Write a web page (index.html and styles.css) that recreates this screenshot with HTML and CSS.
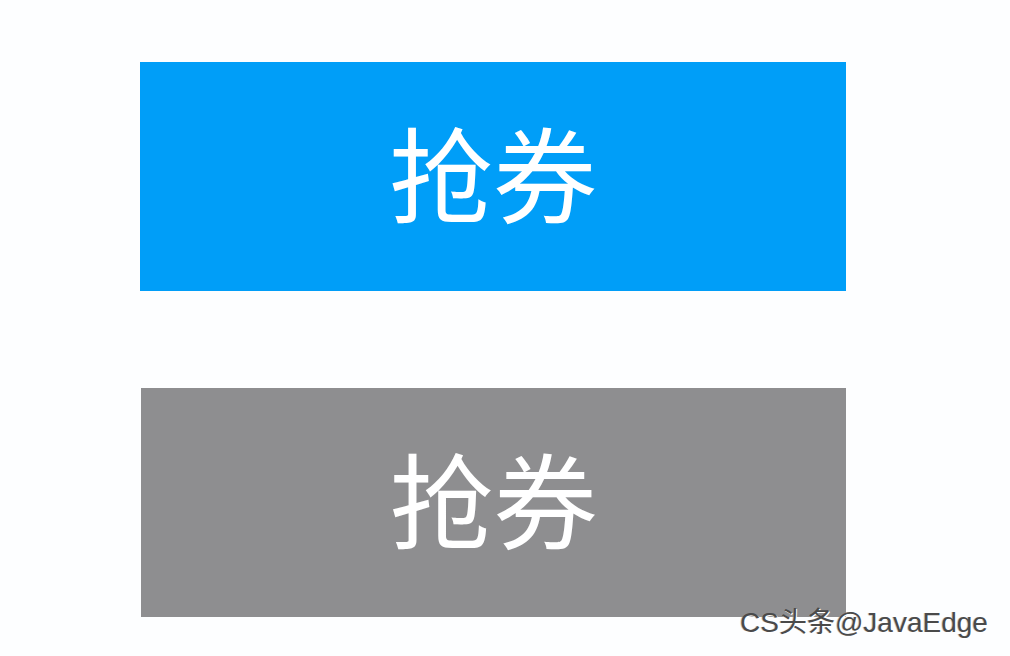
FILE: index.html
```html
<!DOCTYPE html>
<html lang="zh">
<head>
<meta charset="utf-8">
<title>抢券</title>
<link rel="stylesheet" href="styles.css">
</head>
<body>
<main class="stage">
  <div class="btn btn-active">抢券</div>
  <div class="btn btn-disabled">抢券</div>
</main>
<div class="mark">CS头条@JavaEdge</div>
</body>
</html>
```
FILE: styles.css
```css
html, body {
  margin: 0;
  padding: 0;
  background: #fdfeff;
}

body {
  width: 1010px;
  height: 656px;
  overflow: hidden;
  position: relative;
  font-family: "Noto Sans CJK SC", "Noto Sans", sans-serif;
}

.stage {
  display: flex;
  flex-direction: column;
  gap: 97px;
  padding: 62px 0 0 140px;
}

.btn {
  width: 706px;
  height: 229px;
  display: flex;
  align-items: center;
  justify-content: center;
  color: #ffffff;
  font-size: 104px;
  line-height: 1;
  padding-bottom: 12px;
  box-sizing: border-box;
}

.btn-active {
  background: #009ef8;
}

.btn-disabled {
  background: #8e8e90;
  margin-left: 1px;
  width: 705px;
}

/* source watermark in the lower right corner */
.mark {
  position: absolute;
  left: 740px;
  top: 604px;
  height: 38px;
  font-family: "Liberation Sans", "Noto Sans CJK SC", sans-serif;
  font-size: 28px;
  line-height: 38px;
  white-space: nowrap;
  color: #4a4a4a;
  text-shadow: 1px 1px 0 #ffffff, -1px 0 0 rgba(150, 150, 150, 0.5);
}
```
